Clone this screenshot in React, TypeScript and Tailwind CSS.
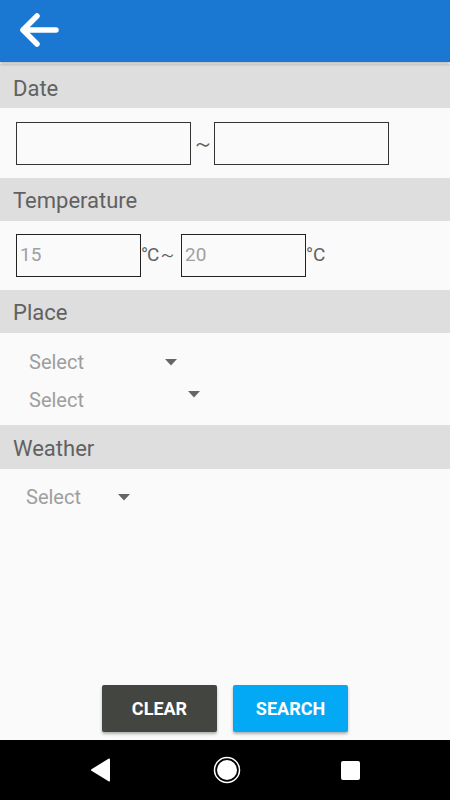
import React from 'react';

const font = { fontFamily: 'Roboto, "Noto Sans", sans-serif' };

function SectionHeader({ label }: { label: string }) {
  return (
    <div className="h-[43px] bg-[#dedede] flex items-center px-[13px] pt-[2px] text-[22px] text-[#616161]">
      {label}
    </div>
  );
}

function Caret({ className = '' }: { className?: string }) {
  return (
    <svg width="12" height="7" viewBox="0 0 12 7" className={className}>
      <path d="M0 0h12L6 6.5z" fill="#666666" />
    </svg>
  );
}

export default function App() {
  return (
    <div className="h-[800px] w-[450px] flex flex-col bg-[#fafafa]" style={font}>
      {/* Toolbar */}
      <div className="h-[62px] bg-[#1a77d2] flex items-center pl-[19px] shadow-[0_2px_3px_rgba(0,0,0,0.25)] relative z-10">
        <svg width="40" height="38" viewBox="0 0 40 38">
          <path
            d="M37 18H4M18 4L4 18l14 14"
            fill="none"
            stroke="#ffffff"
            strokeWidth="5.5"
            strokeLinecap="round"
            strokeLinejoin="round"
          />
        </svg>
      </div>

      <div className="flex-1 flex flex-col pt-[2px]">
        <div className="h-[44px] bg-[#dedede] flex items-center px-[13px] pt-[4px] text-[22px] text-[#616161]">Date</div>
        <div className="h-[70px] flex items-center pl-[16px]">
          <div className="w-[175px] h-[43px] border border-[#333333] bg-[#fafafa]" />
          <span className="w-[23px] text-center text-[22px] text-[#616161]">～</span>
          <div className="w-[175px] h-[43px] border border-[#333333] bg-[#fafafa]" />
        </div>

        <SectionHeader label="Temperature" />
        <div className="h-[69px] flex items-center pl-[16px]">
          <div className="w-[125px] h-[43px] border border-[#222222] flex items-center pl-[3px] text-[19px] text-[#a0a0a0]">
            15
          </div>
          <span className="w-[40px] text-[19px] text-[#616161] whitespace-nowrap tracking-[-1px]">°C～</span>
          <div className="w-[125px] h-[43px] border border-[#222222] flex items-center pl-[3px] text-[19px] text-[#a0a0a0]">
            20
          </div>
          <span className="text-[19px] text-[#616161]">°C</span>
        </div>

        <SectionHeader label="Place" />
        <div className="h-[92px] flex flex-col pt-[10px]">
          <div className="h-[38px] flex items-center pl-[29px]">
            <span className="text-[20px] text-[#9e9e9e] w-[54px]">Select</span>
            <Caret className="ml-[82px]" />
          </div>
          <div className="h-[38px] flex items-center pl-[29px]">
            <span className="text-[20px] text-[#9e9e9e] w-[54px]">Select</span>
            <Caret className="ml-[105px] -mt-[12px]" />
          </div>
        </div>

        <div className="h-[44px] bg-[#dedede] flex items-center px-[13px] pt-[2px] text-[22px] text-[#616161]">Weather</div>
        <div className="h-[56px] flex items-center pl-[26px]">
          <span className="text-[20px] text-[#9e9e9e] w-[55px]">Select</span>
          <Caret className="ml-[37px]" />
        </div>

        <div className="flex-1" />

        <div className="flex justify-center gap-[16px] pb-[8px]">
          <button className="w-[115px] h-[47px] rounded-[2px] bg-[#434541] text-white font-bold text-[18px] shadow-[0_2px_3px_rgba(0,0,0,0.3)]">
            CLEAR
          </button>
          <button className="w-[115px] h-[47px] rounded-[2px] bg-[#03a9f4] text-white font-bold text-[18px] shadow-[0_2px_3px_rgba(0,0,0,0.3)]">
            SEARCH
          </button>
        </div>
      </div>

      {/* Nav bar */}
      <div className="h-[60px] bg-black flex items-center justify-between pl-[90px] pr-[90px]">
        <svg width="22" height="24" viewBox="0 0 22 24">
          <path d="M20 1.5v21a1 1 0 0 1-1.5.8L1.5 12.8a1 1 0 0 1 0-1.6L18.5.7A1 1 0 0 1 20 1.5z" fill="#ffffff" />
        </svg>
        <svg width="28" height="28" viewBox="0 0 28 28">
          <circle cx="14" cy="14" r="12.5" fill="none" stroke="#ffffff" strokeWidth="1.5" />
          <circle cx="14" cy="14" r="10" fill="#ffffff" />
        </svg>
        <div className="w-[19px] h-[19px] bg-white rounded-[2px]" />
      </div>
    </div>
  );
}
